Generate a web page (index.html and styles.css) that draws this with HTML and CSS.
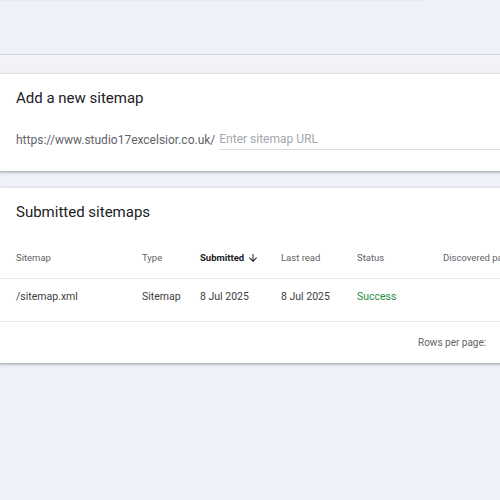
FILE: index.html
```html
<!DOCTYPE html>
<html>
<head>
<meta charset="utf-8">
<link rel="stylesheet" href="styles.css">
</head>
<body>
<div class="topline"></div>
<div class="header-space"></div>
<div class="band"></div>
<section class="card add-card">
  <h2 class="card-title">Add a new sitemap</h2>
  <div class="url-row">
    <span class="prefix">https://www.studio17excelsior.co.uk/</span>
    <span class="input">Enter sitemap URL</span>
  </div>
</section>
<section class="card list-card">
  <h2 class="card-title">Submitted sitemaps</h2>
  <div class="table">
    <div class="row head">
      <span class="c1">Sitemap</span>
      <span class="c2">Type</span>
      <span class="c3 sorted">Submitted <svg class="arrow" width="12" height="12" viewBox="0 0 24 24"><path d="M20 12l-1.41-1.41L13 16.17V4h-2v12.17l-5.58-5.59L4 12l8 8 8-8z" fill="#202124"/></svg></span>
      <span class="c4">Last read</span>
      <span class="c5">Status</span>
      <span class="c6">Discovered pages</span>
    </div>
    <div class="row body">
      <span class="c1">/sitemap.xml</span>
      <span class="c2">Sitemap</span>
      <span class="c3">8 Jul 2025</span>
      <span class="c4">8 Jul 2025</span>
      <span class="c5 success">Success</span>
      <span class="c6"></span>
    </div>
  </div>
  <div class="footer">Rows per page:</div>
</section>
</body>
</html>
```
FILE: styles.css
```css
html, body { margin: 0; padding: 0; }
body {
  background: #eef1f7;
  font-family: Roboto, "Noto Sans", sans-serif;
  color: #202124;
  width: 500px;
  height: 500px;
  overflow: hidden;
}
.topline { height: 1px; width: 424px; background: #e6e9f6; }
.header-space { height: 53px; }
.band {
  height: 18px;
  border-top: 1px solid #d4d7dc;
  background: #f1f3f7;
}
.card {
  background: #fff;
  box-shadow: 0 1px 2px rgba(60,64,67,0.3), 0 1px 3px 1px rgba(60,64,67,0.15);
  width: 520px;
}
.add-card { height: 97px; margin-top: 1px; }
.list-card { margin-top: 17px; height: 175px; }
.card-title {
  margin: 0;
  font-weight: 400;
  font-size: 15px;
  line-height: 20px;
  padding: 14px 16px 0;
}
.url-row {
  display: flex;
  align-items: flex-end;
  padding: 21px 0 0 16px;
}
.prefix { font-size: 12px; color: #5f6368; line-height: 20px; margin-right: 4px; }
.input {
  flex: 1;
  font-size: 12px;
  color: #a3a7ad;
  line-height: 20px;
  border-bottom: 1px solid #dadce0;
  padding-bottom: 0;
}
.table { margin-top: 15px; overflow: hidden; }
.row { display: flex; align-items: center; border-bottom: 1px solid #e8eaed; }
.row.head { height: 41px; font-size: 9.5px; color: #5f6368; font-weight: 400; }
.row.body { height: 35px; padding-bottom: 7px; font-size: 10.5px; color: #3c4043; }
.row span { white-space: nowrap; }
.c1 { width: 126px; padding-left: 16px; flex: none; }
.c2 { width: 58px; flex: none; }
.c3 { width: 81px; display: flex; align-items: center; flex: none; }
.c4 { width: 76px; flex: none; }
.c5 { width: 86px; flex: none; }
.c6 { flex: 1; overflow: hidden; }
.sorted { color: #202124; font-weight: 700; }
.arrow { margin-left: 3px; }
.success { color: #1e8e3e; }
.footer {
  font-size: 10px;
  color: #5f6368;
  height: 41px;
  line-height: 41px;
  padding-left: 418px;
}
```
